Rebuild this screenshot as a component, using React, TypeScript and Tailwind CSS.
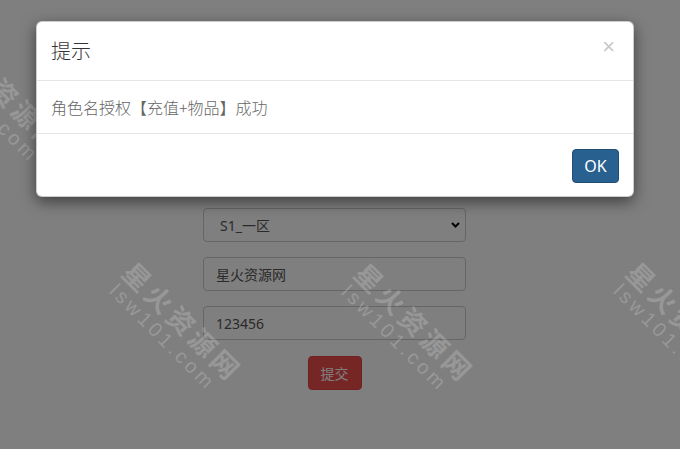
import React from 'react';

const marks = [
  { left: -39, top: 29 },
  { left: 138, top: 257 },
  { left: 370, top: 258 },
  { left: 642, top: 257 },
];

function Watermark({ left, top }: { left: number; top: number }) {
  return (
    <div
      className="pointer-events-none absolute origin-top-left rotate-45 whitespace-nowrap text-white/20"
      style={{ left, top }}
    >
      <div className="text-[27px] font-semibold leading-[28px] tracking-[4px] font-['Noto_Sans_CJK_SC',sans-serif]">
        星火资源网
      </div>
      <div className="ml-[4px] mt-px text-[20px] leading-[20px] tracking-[3.5px] font-['Liberation_Sans',sans-serif]">
        lsw101.com
      </div>
    </div>
  );
}

export default function App() {
  return (
    <div className="relative h-[449px] w-[680px] overflow-hidden bg-white font-['Noto_Sans','Noto_Sans_CJK_SC',sans-serif]">
      {/* page behind the dialog */}
      <div className="ml-[203px] flex w-[263px] flex-col gap-[15px] pt-[208px]">
        <div className="relative">
          <select className="h-[34px] w-full appearance-none rounded-[4px] border border-[#ccc] bg-white pl-[16px] text-[14px] text-[#555] outline-none">
            <option>S1_一区</option>
          </select>
          <svg
            className="pointer-events-none absolute right-[6px] top-[14px]"
            width="9"
            height="6"
            viewBox="0 0 9 6"
          >
            <path d="M1 1l3.5 3.5L8 1" fill="none" stroke="#000" strokeWidth="2" />
          </svg>
        </div>
        <input
          readOnly
          value="星火资源网"
          className="h-[34px] w-full rounded-[4px] border border-[#ccc] bg-white px-[12px] text-[14px] text-[#555] outline-none"
        />
        <input
          readOnly
          value="123456"
          className="h-[34px] w-full rounded-[4px] border border-[#ccc] bg-white px-[12px] text-[14px] text-[#555] outline-none"
        />
        <div className="flex justify-center pt-px">
          <button className="h-[34px] w-[54px] rounded-[4px] border border-[#e04444] bg-[#ee4c4c] text-[14px] text-white">
            提交
          </button>
        </div>
      </div>

      {/* backdrop */}
      <div className="absolute inset-0 bg-black/50" />

      {marks.map((m, i) => (
        <Watermark key={i} left={m.left} top={m.top} />
      ))}

      {/* dialog */}
      <div className="absolute left-[36px] top-[21px] w-[598px] rounded-[6px] border border-black/20 bg-white shadow-[0_5px_15px_rgba(0,0,0,0.5)] font-['Noto_Sans_CJK_SC',sans-serif]">
        <div className="relative border-b border-[#e5e5e5] px-[14px] py-[15px]">
          <h4 className="text-[20px] font-light leading-[28px] text-[#333]">提示</h4>
          <button className="absolute right-[18px] top-[12px] text-[22px] leading-[26px] text-[#c8c8c8] font-['Liberation_Sans',sans-serif]">
            ×
          </button>
        </div>
        <div className="border-b border-[#e5e5e5] px-[14px] py-[15px] text-[16px] font-light leading-[22px] text-[#666]">
          角色名授权【充值+物品】成功
        </div>
        <div className="flex justify-end px-[14px] pb-[13px] pt-[15px]">
          <button className="h-[34px] w-[47px] rounded-[4px] border border-[#204d74] bg-[#286090] text-[16px] text-white font-['Noto_Sans',sans-serif]">
            OK
          </button>
        </div>
      </div>
    </div>
  );
}
